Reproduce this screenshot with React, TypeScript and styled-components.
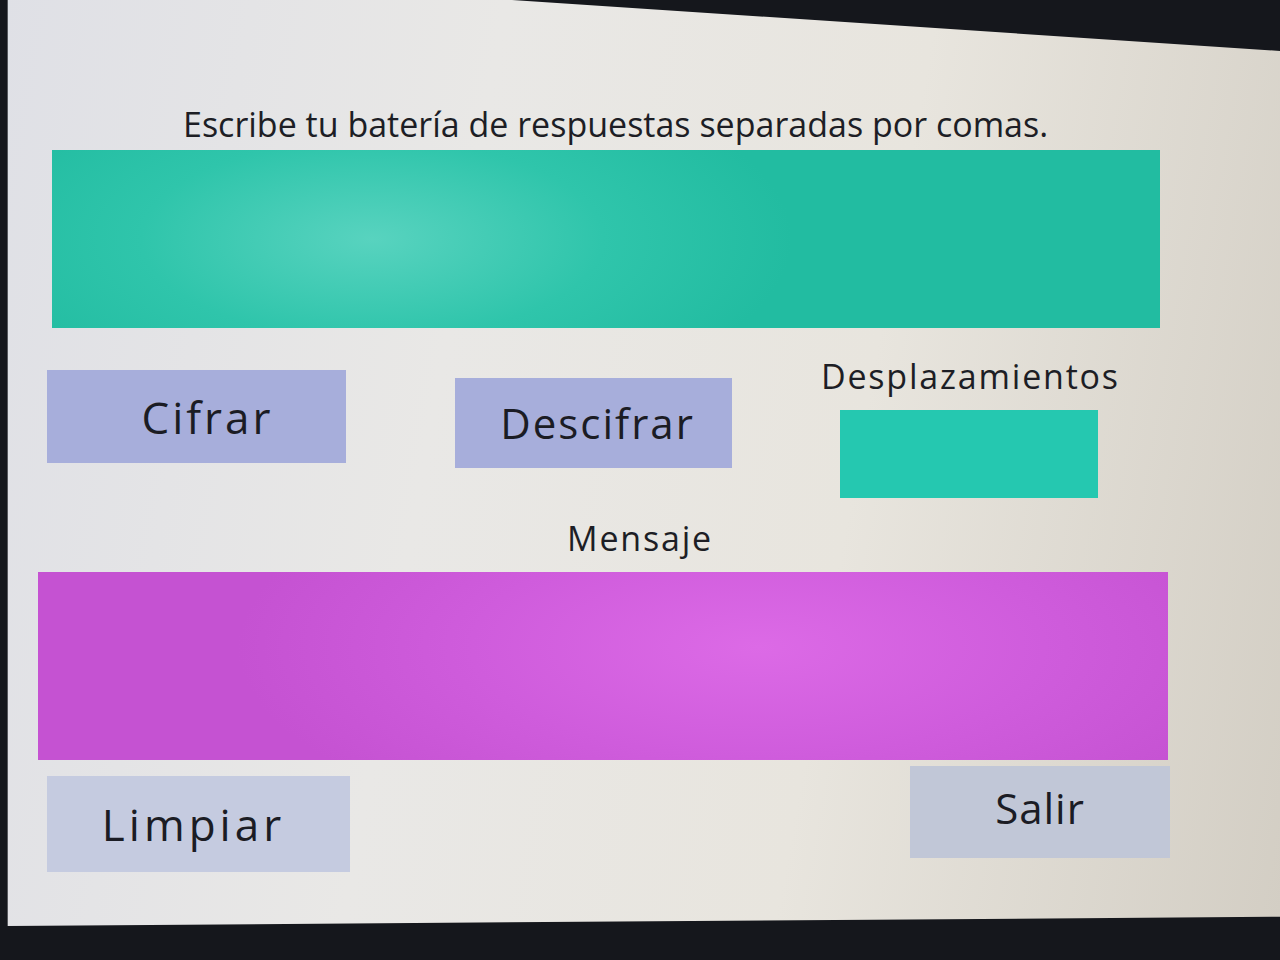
import * as React from 'react';
import styled, { createGlobalStyle } from 'styled-components';

const GlobalStyle = createGlobalStyle`
  html, body {
    margin: 0;
    padding: 0;
    background: #15171c;
  }
  body {
    font-family: "Open Sans", "Liberation Sans", sans-serif;
    color: #1d1e25;
  }
`;

const Screen = styled.div`
  width: 1280px;
  height: 926px;
  display: flex;
  flex-direction: column;
  background: linear-gradient(100deg, #dfe0e6 0%, #e9e8e6 35%, #e8e5de 65%, #d3cec4 100%);
  clip-path: polygon(0.6% 0, 40% 0, 100% 5.5%, 100% 99%, 0.6% 100%);
  overflow: hidden;
`;

const Title = styled.div`
  margin: 104px 0 0 183px;
  font-size: 34px;
  line-height: 40px;
  font-weight: 500;
`;

interface FieldProps {
  tone: 'teal' | 'magenta';
}

const Field = styled.div<FieldProps>`
  background: ${(props) => props.tone === 'teal'
    ? 'radial-gradient(ellipse 420px 180px at 320px 50%, #58d3bf 0%, #2fc5ab 55%, #22bca1 100%)'
    : 'radial-gradient(ellipse 520px 200px at 720px 40%, #dc6ae6 0%, #cf5cdc 55%, #c552d2 100%)'};
`;

const AnswersField = styled(Field)`
  margin: 6px 0 0 52px;
  width: 1108px;
  height: 178px;
`;

const Controls = styled.div`
  display: flex;
  align-items: flex-start;
  height: 172px;
`;

interface ButtonProps {
  tone: 'lavender' | 'grey';
}

const Button = styled.div<ButtonProps>`
  display: flex;
  justify-content: center;
  align-items: center;
  background: ${(props) => props.tone === 'lavender' ? '#a7aedb' : '#c5cbe0'};
  font-size: 42px;
  line-height: 48px;
  letter-spacing: 2px;
  color: #1b1c24;
`;

const CipherButton = styled(Button)`
  margin: 42px 0 0 47px;
  width: 299px;
  height: 93px;
  padding-left: 22px;
  box-sizing: border-box;
  font-size: 44px;
  letter-spacing: 3px;
`;

const DecipherButton = styled(Button)`
  margin: 50px 0 0 109px;
  width: 277px;
  height: 90px;
  padding-left: 8px;
  box-sizing: border-box;
`;

const ShiftGroup = styled.div`
  display: flex;
  flex-direction: column;
  margin: 28px 0 0 89px;
`;

const Label = styled.div`
  font-size: 34px;
  line-height: 40px;
  font-weight: 500;
  letter-spacing: 1.8px;
`;

const ShiftField = styled.div`
  margin: 14px 0 0 19px;
  width: 258px;
  height: 88px;
  background: #25c8b0;
`;

const MessageLabel = styled(Label)`
  margin-top: 18px;
  text-align: center;
`;

const MessageField = styled(Field)`
  margin: 14px 0 0 38px;
  width: 1130px;
  height: 188px;
`;

const Footer = styled.div`
  display: flex;
  justify-content: space-between;
  align-items: flex-start;
  padding: 0 110px 0 47px;
`;

const ClearButton = styled(Button)`
  margin-top: 16px;
  width: 303px;
  height: 96px;
  padding-right: 10px;
  box-sizing: border-box;
  font-size: 44px;
  letter-spacing: 4px;
`;

const ExitButton = styled(Button)`
  margin-top: 6px;
  width: 260px;
  height: 92px;
  align-items: flex-start;
  padding-top: 18px;
  box-sizing: border-box;
  background: #c1c7d7;
  letter-spacing: 1px;
`;

export default function App() {
  return (
    <>
      <GlobalStyle />
      <Screen>
        <Title>Escribe tu batería de respuestas separadas por comas.</Title>
        <AnswersField tone="teal" />
        <Controls>
          <CipherButton tone="lavender">Cifrar</CipherButton>
          <DecipherButton tone="lavender">Descifrar</DecipherButton>
          <ShiftGroup>
            <Label>Desplazamientos</Label>
            <ShiftField />
          </ShiftGroup>
        </Controls>
        <MessageLabel>Mensaje</MessageLabel>
        <MessageField tone="magenta" />
        <Footer>
          <ClearButton tone="grey">Limpiar</ClearButton>
          <ExitButton tone="grey">Salir</ExitButton>
        </Footer>
      </Screen>
    </>
  );
}
